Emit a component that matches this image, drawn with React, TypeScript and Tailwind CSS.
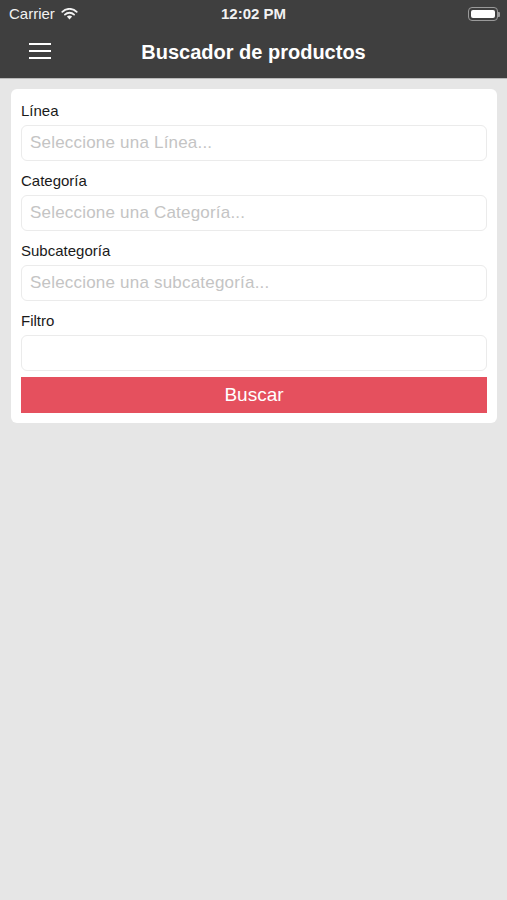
import React from "react";

const font = { fontFamily: '"Liberation Sans", Arial, sans-serif' };

function Field({ label, placeholder }: { label: string; placeholder?: string }) {
  return (
    <div className="flex flex-col">
      <div className="h-[34px] flex items-center text-[15px] text-[#1a1a1a] pt-[6px]">{label}</div>
      <div className="h-[36px] rounded-[6px] border border-[#ebebeb] bg-white flex items-center px-[8px] text-[17px] tracking-[0.2px] text-[#c4c4c4]">
        {placeholder}
      </div>
    </div>
  );
}

export default function App() {
  return (
    <div className="w-[507px] h-[900px] bg-[#e6e6e6] flex flex-col" style={font}>
      <div className="bg-[#3f3f3f] h-[79px] border-b border-[#b9b9b9] flex flex-col">
        <div className="h-[28px] flex items-center justify-between pl-[9px] pr-[7px] text-white relative">
          <div className="flex items-center gap-[6px]">
            <span className="text-[15px] text-[#f2f2f2]">Carrier</span>
            <svg width="17" height="12" viewBox="0 0 17 12">
              <path d="M8.5 11.5 L5.9 8.6 A3.8 3.8 0 0 1 11.1 8.6 Z" fill="#f2f2f2" />
              <path d="M3.9 6.6 A6.6 6.6 0 0 1 13.1 6.6" stroke="#f2f2f2" strokeWidth="1.8" fill="none" strokeLinecap="round" />
              <path d="M1.3 3.8 A10.2 10.2 0 0 1 15.7 3.8" stroke="#f2f2f2" strokeWidth="1.8" fill="none" strokeLinecap="round" />
            </svg>
          </div>
          <span className="absolute left-1/2 -translate-x-1/2 text-[15px] font-bold text-[#f2f2f2]">12:02 PM</span>
          <div className="flex items-center">
            <div className="w-[30px] h-[14px] rounded-[4px] border border-[#9a9a9a] p-[2px]">
              <div className="w-full h-full bg-white rounded-[2px]" />
            </div>
            <div className="w-[2px] h-[5px] bg-[#9a9a9a] rounded-r-[1px]" />
          </div>
        </div>
        <div className="flex-1 flex items-center relative">
          <div className="absolute left-[29px] top-[15px] flex flex-col gap-[5px]">
            <div className="w-[22px] h-[2px] bg-white" />
            <div className="w-[22px] h-[2px] bg-white" />
            <div className="w-[22px] h-[2px] bg-white" />
          </div>
          <div className="w-full text-center text-white text-[20px] font-bold pb-[2px]">Buscador de productos</div>
        </div>
      </div>
      <div className="pl-[11px] pr-[10px] pt-[10px]">
        <div className="bg-white rounded-[6px] px-[10px] pt-[2px] pb-[10px] flex flex-col">
          <Field label="Línea" placeholder="Seleccione una Línea..." />
          <Field label="Categoría" placeholder="Seleccione una Categoría..." />
          <Field label="Subcategoría" placeholder="Seleccione una subcategoría..." />
          <Field label="Filtro" />
          <button className="mt-[6px] h-[36px] bg-[#e5505e] text-white text-[19px] flex items-center justify-center">
            Buscar
          </button>
        </div>
      </div>
    </div>
  );
}
